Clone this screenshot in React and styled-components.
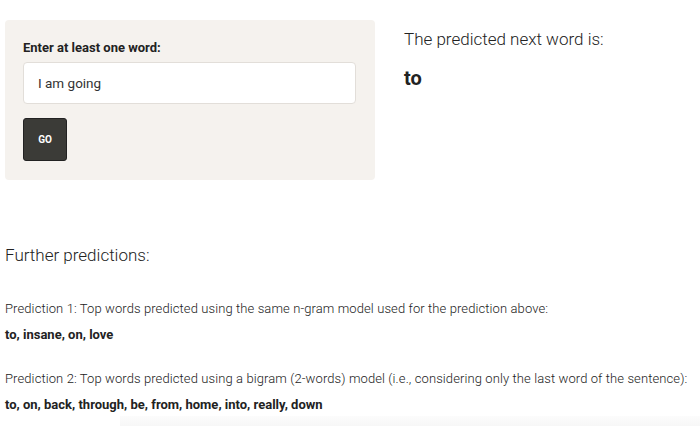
import React from "react";
import styled, { createGlobalStyle } from "styled-components";

const GlobalStyle = createGlobalStyle`
  body {
    margin: 0;
    background: #ffffff;
    font-family: Roboto, "Liberation Sans", sans-serif;
    color: #222;
  }
`;

const Page = styled.div`
  width: 700px;
  height: 426px;
  overflow: hidden;
  position: relative;
`;

const Top = styled.div`
  display: flex;
  align-items: flex-start;
  padding: 20px 0 0 5px;
  gap: 29px;
`;

const Panel = styled.div`
  width: 370px;
  box-sizing: border-box;
  background: #f5f2ee;
  border-radius: 4px;
  padding: 19px 19px 19px 18px;
`;

const Label = styled.div`
  font-size: 13px;
  font-weight: 700;
  color: #222;
  line-height: 17px;
  margin-bottom: 6px;
`;

const Input = styled.input`
  display: block;
  width: 100%;
  height: 42px;
  box-sizing: border-box;
  border: 1px solid #e2ded9;
  border-radius: 4px;
  background: #fff;
  padding: 0 14px;
  font-family: inherit;
  font-size: 13.5px;
  color: #333;
  outline: none;
`;

const GoButton = styled.button`
  margin-top: 14px;
  width: 44px;
  height: 43px;
  background: #3b3b37;
  border: 1px solid #222;
  border-radius: 3px;
  color: #fff;
  font-family: inherit;
  font-weight: 700;
  font-size: 10px;
  padding: 0;
`;

const Result = styled.div`
  padding-top: 8px;
`;

const ResultTitle = styled.div`
  font-size: 17px;
  font-weight: 300;
  line-height: 22px;
  color: #222;
`;

const Word = styled.div`
  margin-top: 16px;
  font-size: 20px;
  font-weight: 700;
  color: #222;
`;

const Further = styled.section`
  padding: 0 0 0 5px;
  margin-top: 64px;
`;

const FurtherTitle = styled.div`
  font-size: 17px;
  font-weight: 300;
  line-height: 22px;
  margin-bottom: 34px;
`;

const Block = styled.div`
  margin-bottom: 27px;
`;

const Note = styled.div`
  font-size: 13px;
  font-weight: 300;
  line-height: 17px;
  letter-spacing: 0.1px;
  margin-bottom: 9px;
`;

const Words = styled.div`
  font-size: 13px;
  font-weight: 700;
  line-height: 17px;
`;

const Shade = styled.div`
  position: absolute;
  left: 120px;
  right: 0;
  bottom: 0;
  height: 10px;
  background: linear-gradient(#fcfcfc, #f7f7f7);
`;

export default function App() {
  return (
    <Page>
      <GlobalStyle />
      <Top>
        <Panel>
          <Label>Enter at least one word:</Label>
          <Input defaultValue="I am going" />
          <GoButton>GO</GoButton>
        </Panel>
        <Result>
          <ResultTitle>The predicted next word is:</ResultTitle>
          <Word>to</Word>
        </Result>
      </Top>
      <Further>
        <FurtherTitle>Further predictions:</FurtherTitle>
        <Block>
          <Note>Prediction 1: Top words predicted using the same n-gram model used for the prediction above:</Note>
          <Words>to, insane, on, love</Words>
        </Block>
        <Block>
          <Note>Prediction 2: Top words predicted using a bigram (2-words) model (i.e., considering only the last word of the sentence):</Note>
          <Words>to, on, back, through, be, from, home, into, really, down</Words>
        </Block>
      </Further>
      <Shade />
    </Page>
  );
}
